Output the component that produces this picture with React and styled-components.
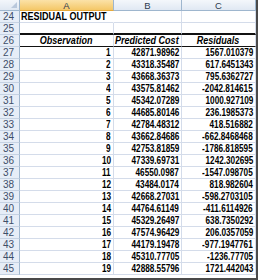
import React from 'react';
import styled, { createGlobalStyle } from 'styled-components';

const GlobalStyle = createGlobalStyle`
    html, body {
        margin: 0;
        padding: 0;
        background: #ffffff;
    }
`;

// rows of the residual table: observation, predicted cost, residual
const rows = [
    [1, '42871.98962', '1567.010379'],
    [2, '43318.35487', '617.6451343'],
    [3, '43668.36373', '795.6362727'],
    [4, '43575.81462', '-2042.814615'],
    [5, '45342.07289', '1000.927109'],
    [6, '44685.80146', '236.1985373'],
    [7, '42784.48312', '418.516882'],
    [8, '43662.84686', '-662.8468468'],
    [9, '42753.81859', '-1786.818595'],
    [10, '47339.69731', '1242.302695'],
    [11, '46550.0987', '-1547.098705'],
    [12, '43484.0174', '818.982604'],
    [13, '42668.27031', '-598.2703105'],
    [14, '44764.61149', '-411.6114926'],
    [15, '45329.26497', '638.7350292'],
    [16, '47574.96429', '206.0357059'],
    [17, '44179.19478', '-977.1947761'],
    [18, '45310.77705', '-1236.77705'],
    [19, '42888.55796', '1721.442043'],
];

const origins = { 'flex-start': 'left center', center: 'center', 'flex-end': 'right center' };

const Frame = styled.div`
    width: 258px;
    height: 280px;
    overflow: hidden;
    box-sizing: border-box;
    border-right: 2px solid #4a4a4a;
    border-bottom: 2px solid #4a4a4a;
    background: #ffffff;
`;

const Sheet = styled.div`
    display: grid;
    grid-template-columns: 20px 94px 68px 74px;
    grid-auto-rows: 12px;
    grid-template-rows: 11px;
    font-family: "Liberation Sans", Arial, sans-serif;
`;

const Corner = styled.div`
    position: relative;
    box-sizing: border-box;
    background: linear-gradient(#f3f6fb, #dfe7f2);
    border-right: 1px solid #9eb6ce;
    border-bottom: 1px solid #9eb6ce;

    &::after {
        content: '';
        position: absolute;
        right: 2px;
        bottom: 2px;
        border-left: 6px solid transparent;
        border-bottom: 6px solid #b9c8dc;
    }
`;

const ColHead = styled.div`
    box-sizing: border-box;
    display: flex;
    align-items: center;
    justify-content: center;
    font-size: 9.5px;
    color: #2d3a4f;
    background: ${(p) => (p.$active
        ? 'linear-gradient(#fbe2a8, #f4c767)'
        : 'linear-gradient(#f4f7fb, #e0e8f3)')};
    border-right: 1px solid #9eb6ce;
    border-bottom: 1px solid ${(p) => (p.$active ? '#e6a93a' : '#9eb6ce')};
`;

const RowHead = styled.div`
    box-sizing: border-box;
    display: flex;
    align-items: center;
    padding-left: 3px;
    font-size: 10px;
    color: #3e4e69;
    background: #e6edf7;
    border-right: 1px solid #9eb6ce;
    border-bottom: 1px solid #c5d2e3;
`;

const Cell = styled.div`
    box-sizing: border-box;
    display: flex;
    align-items: center;
    justify-content: ${(p) => p.$align || 'flex-end'};
    padding: 0 2px 0 1px;
    white-space: nowrap;
    border-right: 1px solid ${(p) => (p.$free ? 'transparent' : '#d4dcea')};
    border-bottom: ${(p) => p.$under || '1px solid #d4dcea'};
`;

// Arial Narrow look: bold Liberation Sans squeezed to 82%
const Text = styled.span`
    display: inline-block;
    font-size: ${(p) => (p.$head ? '11px' : '10px')};
    font-weight: bold;
    font-style: ${(p) => (p.$italic ? 'italic' : 'normal')};
    color: #000000;
    line-height: 11px;
    transform: scaleX(0.82);
    transform-origin: ${(p) => origins[p.$align || 'flex-end']};
`;

const App = () => {
    return (
        <>
            <GlobalStyle />
            <Frame>
                <Sheet>
                    <Corner />
                    <ColHead $active>A</ColHead>
                    <ColHead>B</ColHead>
                    <ColHead>C</ColHead>

                    <RowHead>24</RowHead>
                    <Cell $align="flex-start" $free>
                        <Text $head $align="flex-start">RESIDUAL OUTPUT</Text>
                    </Cell>
                    <Cell />
                    <Cell />

                    <RowHead>25</RowHead>
                    <Cell $under="2px solid #111" />
                    <Cell $under="2px solid #111" />
                    <Cell $under="2px solid #111" />

                    <RowHead>26</RowHead>
                    <Cell $align="center" $under="1px solid #111">
                        <Text $head $italic $align="center">Observation</Text>
                    </Cell>
                    <Cell $align="center" $under="1px solid #111">
                        <Text $head $italic $align="center">Predicted Cost</Text>
                    </Cell>
                    <Cell $align="center" $under="1px solid #111">
                        <Text $head $italic $align="center">Residuals</Text>
                    </Cell>

                    {rows.map(([obs, cost, resid], i) => (
                        <React.Fragment key={obs}>
                            <RowHead>{27 + i}</RowHead>
                            <Cell><Text>{obs}</Text></Cell>
                            <Cell><Text>{cost}</Text></Cell>
                            <Cell><Text>{resid}</Text></Cell>
                        </React.Fragment>
                    ))}
                </Sheet>
            </Frame>
        </>
    );
};

export default App;
